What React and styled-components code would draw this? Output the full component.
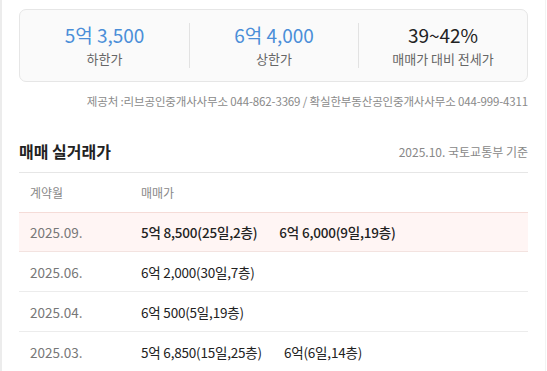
import React from "react";
import styled, { createGlobalStyle } from "styled-components";

const Global = createGlobalStyle`
  html, body { margin: 0; padding: 0; background: #fff; }
  body { font-family: "Noto Sans CJK KR", "Noto Sans", sans-serif; }
`;

const Page = styled.div`
  width: 546px;
  height: 371px;
  box-sizing: border-box;
  border-left: 2px solid #ececec;
  border-right: 1px solid #f3f3f3;
  padding: 9px 17px 0 17px;
  overflow: hidden;
`;

const Card = styled.div`
  display: grid;
  grid-template-columns: repeat(3, 1fr);
  height: 73px;
  box-sizing: border-box;
  border: 1px solid #e6e6e6;
  border-radius: 7px;
  background: #fafafa;
  align-items: center;
`;

const Stat = styled.div`
  display: flex;
  flex-direction: column;
  align-items: center;
  border-left: ${(p) => (p.$first ? "none" : "1px solid #e2e2e2")};
`;

const StatValue = styled.div`
  font-size: 19px;
  line-height: 24px;
  color: ${(p) => (p.$dark ? "#222" : "#4a8ed8")};
`;

const StatLabel = styled.div`
  font-size: 13px;
  line-height: 18px;
  color: #666;
  margin-top: 3px;
`;

const Source = styled.div`
  text-align: right;
  font-size: 11.5px;
  line-height: 16px;
  color: #8a8a8a;
  margin-top: 11px;
  letter-spacing: -0.15px;
`;

const TitleRow = styled.div`
  display: flex;
  justify-content: space-between;
  align-items: center;
  margin-top: 31px;
  height: 22px;
  padding-bottom: 10px;
  border-bottom: 1px solid #e6e6e6;
`;

const Title = styled.div`
  font-size: 16px;
  font-weight: 700;
  color: #222;
`;

const Basis = styled.div`
  font-size: 12px;
  color: #888;
`;

const Table = styled.div`
  display: flex;
  flex-direction: column;
`;

const Row = styled.div`
  display: grid;
  grid-template-columns: 111px 1fr;
  align-items: center;
  height: ${(p) => (p.$head ? "39px" : "40px")};
  box-sizing: border-box;
  padding-left: 11px;
  border-top: 1px solid ${(p) => (p.$hl ? "#f5dcd8" : "transparent")};
  border-bottom: 1px solid ${(p) => (p.$hl ? "#f3e3e0" : p.$head ? "transparent" : "#ececec")};
  background: ${(p) => (p.$hl ? "#fff5f4" : "transparent")};
`;

const HeadCell = styled.div`
  font-size: 12px;
  color: #888;
`;

const DateCell = styled.div`
  font-size: 13.5px;
  color: #777;
`;

const Prices = styled.div`
  display: flex;
  gap: 22px;
`;

const Price = styled.span`
  font-size: 13.5px;
  color: #222;
  font-weight: ${(p) => (p.$bold ? 500 : 400)};
  letter-spacing: -0.2px;
`;

const rows = [
  { d: "2025.09.", p: ["5억 8,500(25일,2층)", "6억 6,000(9일,19층)"], hl: true },
  { d: "2025.06.", p: ["6억 2,000(30일,7층)"] },
  { d: "2025.04.", p: ["6억 500(5일,19층)"] },
  { d: "2025.03.", p: ["5억 6,850(15일,25층)", "6억(6일,14층)"] },
];

export default function App() {
  return (
    <>
      <Global />
      <Page>
        <Card>
          <Stat $first>
            <StatValue>5억 3,500</StatValue>
            <StatLabel>하한가</StatLabel>
          </Stat>
          <Stat>
            <StatValue>6억 4,000</StatValue>
            <StatLabel>상한가</StatLabel>
          </Stat>
          <Stat>
            <StatValue $dark>39~42%</StatValue>
            <StatLabel>매매가 대비 전세가</StatLabel>
          </Stat>
        </Card>
        <Source>
          제공처 :리브공인중개사사무소 044-862-3369 / 확실한부동산공인중개사사무소 044-999-4311
        </Source>
        <TitleRow>
          <Title>매매 실거래가</Title>
          <Basis>2025.10. 국토교통부 기준</Basis>
        </TitleRow>
        <Table>
          <Row $head>
            <HeadCell>계약월</HeadCell>
            <HeadCell>매매가</HeadCell>
          </Row>
          {rows.map((r) => (
            <Row key={r.d} $hl={r.hl}>
              <DateCell>{r.d}</DateCell>
              <Prices>
                {r.p.map((x) => (
                  <Price key={x} $bold={r.hl}>{x}</Price>
                ))}
              </Prices>
            </Row>
          ))}
        </Table>
      </Page>
    </>
  );
}
